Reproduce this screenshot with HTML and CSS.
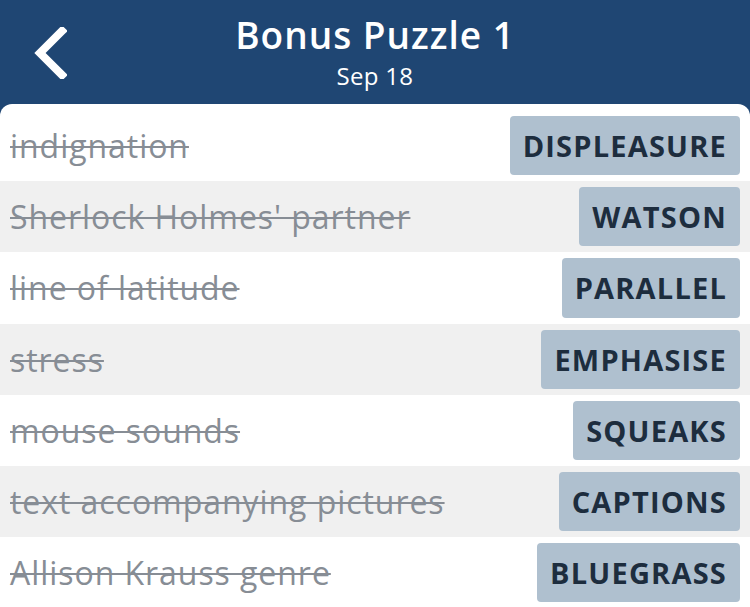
FILE: index.html
```html
<!DOCTYPE html>
<html>
<head>
<meta charset="utf-8">
<link rel="stylesheet" href="styles.css">
</head>
<body>
<header class="topbar">
  <button class="back" aria-label="Back">
    <svg width="36" height="52" viewBox="0 0 36 52"><path d="M31 4 L9 26 L31 48" fill="none" stroke="#fff" stroke-width="8" stroke-linecap="square" stroke-linejoin="miter"/></svg>
  </button>
  <div class="titles">
    <div class="title">Bonus Puzzle 1</div>
    <div class="date">Sep 18</div>
  </div>
</header>
<main class="panel">
  <div class="row"><span class="clue">indignation</span><span class="answer">DISPLEASURE</span></div>
  <div class="row alt"><span class="clue">Sherlock Holmes' partner</span><span class="answer">WATSON</span></div>
  <div class="row"><span class="clue">line of latitude</span><span class="answer">PARALLEL</span></div>
  <div class="row alt"><span class="clue">stress</span><span class="answer">EMPHASISE</span></div>
  <div class="row"><span class="clue">mouse sounds</span><span class="answer">SQUEAKS</span></div>
  <div class="row alt"><span class="clue">text accompanying pictures</span><span class="answer">CAPTIONS</span></div>
  <div class="row"><span class="clue">Allison Krauss genre</span><span class="answer">BLUEGRASS</span></div>
</main>
</body>
</html>
```
FILE: styles.css
```css
html, body {
  margin: 0;
  padding: 0;
  background: #1f4673;
  height: 607px;
  overflow: hidden;
  font-family: "Open Sans", "Noto Sans", sans-serif;
}
.topbar {
  height: 104px;
  position: relative;
  display: flex;
  justify-content: center;
  align-items: flex-start;
}
.back {
  position: absolute;
  left: 31px;
  top: 27px;
  background: none;
  border: 0;
  padding: 0;
  margin: 0;
}
.titles {
  text-align: center;
  color: #fff;
  padding-top: 10px;
}
.title {
  font-size: 37px;
  font-weight: 600;
  line-height: 50px;
  letter-spacing: 1px;
}
.date {
  font-size: 24px;
  line-height: 32px;
  letter-spacing: 0.3px;
}
.panel {
  background: #fff;
  border-radius: 12px 12px 0 0;
  padding-top: 6px;
  height: 497px;
  overflow: hidden;
}
.row {
  height: 71.2px;
  box-sizing: border-box;
  padding: 6px 10px 6px 10px;
  display: flex;
  align-items: center;
  justify-content: space-between;
}
.row.alt {
  background: #f0f0f0;
}
.clue {
  font-size: 32px;
  color: #878d95;
  letter-spacing: 0.95px;
  text-decoration: line-through;
  text-decoration-thickness: 2px;
}
.answer {
  height: 100%;
  display: flex;
  align-items: center;
  background: #afc0cf;
  border-radius: 4px;
  padding: 0 13px;
  font-size: 29px;
  font-weight: 700;
  letter-spacing: 1.2px;
  color: #1d2d3e;
}
```
